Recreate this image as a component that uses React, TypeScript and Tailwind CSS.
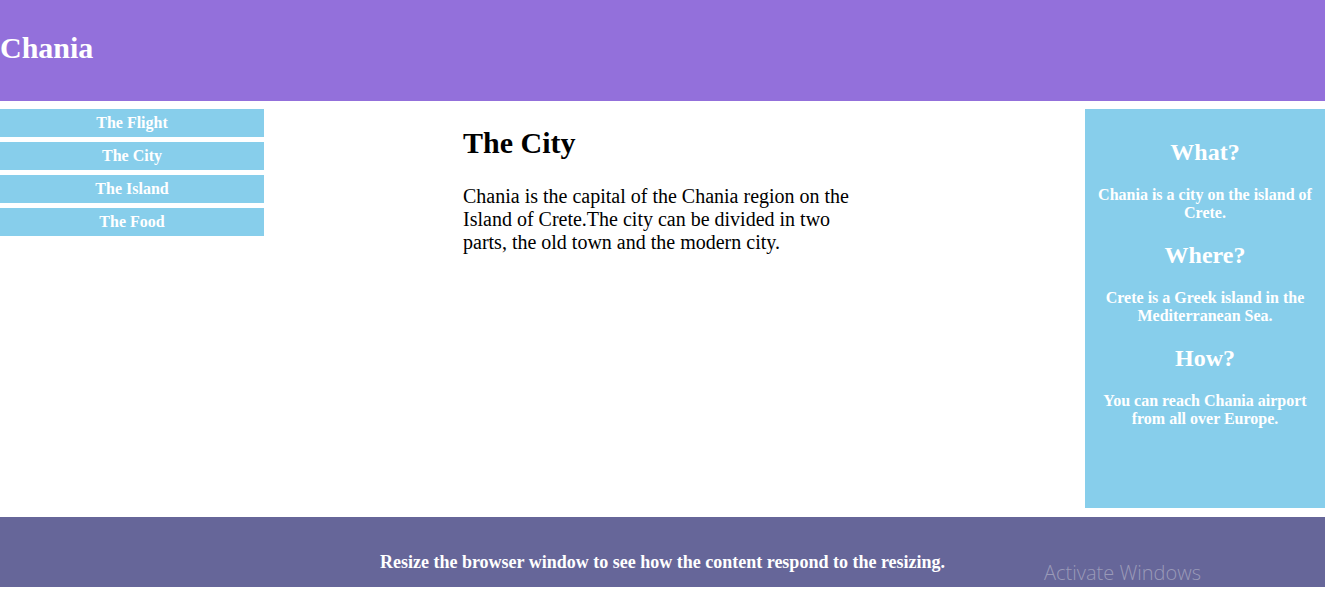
import React from "react";

export default function App() {
  const links = ["The Flight", "The City", "The Island", "The Food"];
  return (
    <div className="relative w-full bg-white text-black" style={{ fontFamily: '"Liberation Serif", "Times New Roman", serif' }}>
      <header className="h-[101px] bg-[#9370DB] pt-[31px]">
        <h1 className="m-0 text-[30px] leading-[34.5px] font-bold text-white">Chania</h1>
      </header>
      <div className="mt-[8px] flex items-start">
        <nav className="flex w-[264px] shrink-0 flex-col gap-[5px]">
          {links.map((l) => (
            <div key={l} className="flex h-[28px] items-center justify-center bg-[#87CEEB] text-[16px] font-bold text-white">
              {l}
            </div>
          ))}
        </nav>
        <main className="flex-1 pl-[199px]">
          <div className="w-[400px]">
            <h1 className="mt-[17px] mb-[24px] text-[30px] leading-[34.5px] font-bold">The City</h1>
            <p className="text-[20px] leading-[23px]">
              Chania is the capital of the Chania region on the Island of Crete.The city can be divided in two parts, the old town and the modern city.
            </p>
          </div>
        </main>
        <aside className="h-[399px] w-[240px] shrink-0 bg-[#87CEEB] px-[10px] pt-[10px] text-center text-white">
          <h2 className="my-[20px] text-[24px] leading-[27px] font-bold">What?</h2>
          <p className="my-[20px] text-[16px] leading-[18px] font-bold">Chania is a city on the island of Crete.</p>
          <h2 className="my-[20px] text-[24px] leading-[27px] font-bold">Where?</h2>
          <p className="my-[20px] text-[16px] leading-[18px] font-bold">Crete is a Greek island in the Mediterranean Sea.</p>
          <h2 className="my-[20px] text-[24px] leading-[27px] font-bold">How?</h2>
          <p className="my-[20px] text-[16px] leading-[18px] font-bold">You can reach Chania airport from all over Europe.</p>
        </aside>
      </div>
      <footer className="mt-[9px] h-[70px] bg-[#666699] pt-[35px] text-center text-[18px] leading-[20.7px] font-bold text-white">
        Resize the browser window to see how the content respond to the resizing.
      </footer>
      <div className="h-[2px]" />
      <div
        className="pointer-events-none absolute left-[1044px] top-[558px] text-[20px] text-[#9a9ab8]"
        style={{ fontFamily: '"Open Sans", "Noto Sans", sans-serif', fontWeight: 300 }}
      >
        Activate Windows
      </div>
    </div>
  );
}
